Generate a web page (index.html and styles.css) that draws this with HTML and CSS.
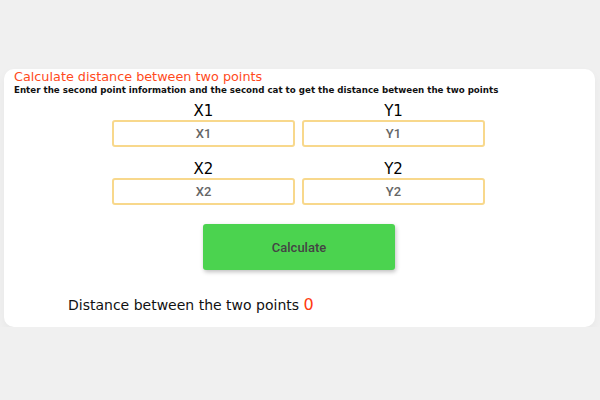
FILE: index.html
```html
<!DOCTYPE html>
<html lang="en">
<head>
    <meta charset="UTF-8">
    <title>Distance</title>
    <link rel="stylesheet" href="styles.css">
</head>
<body>
<div class="card">
    <div class="title">Calculate distance between two points</div>
    <div class="desc">Enter the second point information and the second cat to get the distance between the two points</div>

    <div class="grid">
        <div class="field">
            <div class="label">X1</div>
            <input type="text" placeholder="X1">
        </div>
        <div class="field">
            <div class="label">Y1</div>
            <input type="text" placeholder="Y1">
        </div>
        <div class="field">
            <div class="label">X2</div>
            <input type="text" placeholder="X2">
        </div>
        <div class="field">
            <div class="label">Y2</div>
            <input type="text" placeholder="Y2">
        </div>
    </div>

    <div class="actions">
        <button id="btn">Calculate</button>
    </div>

    <div class="result">Distance between the two points <span id="dist">0</span></div>
</div>
</body>
</html>
```

FILE: styles.css
```css
body{
    margin: 0;
    background: #f0f0f0;
    font-family: "Comic Sans MS", "DejaVu Sans", sans-serif;
}
.card{
    margin: 69px 5px 0 4px;
    height: 258px;
    box-sizing: border-box;
    background: #fff;
    border-radius: 10px;
    box-shadow: 0 4px 10px rgba(0,0,0,0.04);
    padding: 1px 10px 0 10px;
}
.title{
    color: #ff4a1c;
    font-size: 12.8px;
    line-height: 14px;
}
.desc{
    font-size: 8.7px;
    line-height: 12px;
    color: #111;
    font-weight: bold;
}
.grid{
    display: grid;
    grid-template-columns: 183px 183px;
    column-gap: 7px;
    row-gap: 13px;
    width: 373px;
    margin: 6px 0 0 98px;
}
.field .label{
    text-align: center;
    font-size: 15px;
    line-height: 18px;
    height: 18px;
}
.field input{
    display: block;
    width: 100%;
    height: 27px;
    box-sizing: border-box;
    border: 2px solid #f8d88c;
    border-radius: 3px;
    text-align: center;
    font-family: Roboto, "Liberation Sans", sans-serif;
    font-size: 13px;
    font-weight: 500;
    outline: none;
}
.field input::placeholder{
    color: #666;
}
.actions{
    display: flex;
    justify-content: center;
    margin-top: 19px;
    padding-right: 1px;
}
#btn{
    width: 192px;
    height: 46px;
    border: none;
    border-radius: 3px;
    background: #4bd34f;
    color: #444;
    font-family: Roboto, "Liberation Sans", sans-serif;
    font-size: 13px;
    font-weight: 500;
    box-shadow: 1px 2px 4px rgba(0,0,0,0.25);
}
.result{
    margin: 25px 0 0 54px;
    font-size: 14px;
    line-height: 20px;
    color: #111;
}
#dist{
    color: #ff3a10;
    font-size: 16px;
}
```
